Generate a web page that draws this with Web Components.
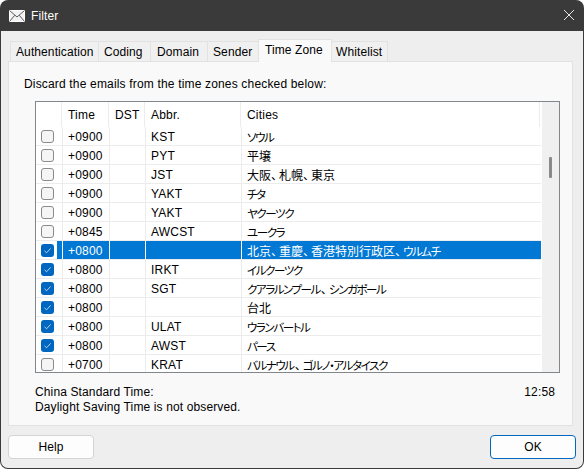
<!DOCTYPE html>
<html>
<head>
<meta charset="utf-8">
<title>Filter</title>
<style>
  html, body { margin: 0; padding: 0; background: #fff; }
  body { font: 12px "Liberation Sans", "Noto Sans CJK JP", sans-serif; color: #000; }
</style>
</head>
<body>
<filter-dialog heading="Filter">
  <zone-tabs>
    <zone-table></zone-table>
  </zone-tabs>
</filter-dialog>

<script>
// Time zone rows: offset, dst, abbreviation, cities, checked, selected
const ZONES = [
  ['+0900', '', 'KST', 'ソウル', false],
  ['+0900', '', 'PYT', '平壌', false],
  ['+0900', '', 'JST', '大阪、札幌、東京', false],
  ['+0900', '', 'YAKT', 'チタ', false],
  ['+0900', '', 'YAKT', 'ヤクーツク', false],
  ['+0845', '', 'AWCST', 'ユークラ', false],
  ['+0800', '', '', '北京、重慶、香港特別行政区、ウルムチ', true, true],
  ['+0800', '', 'IRKT', 'イルクーツク', true],
  ['+0800', '', 'SGT', 'クアラルンプール、シンガポール', true],
  ['+0800', '', '', '台北', true],
  ['+0800', '', 'ULAT', 'ウランバートル', true],
  ['+0800', '', 'AWST', 'パース', true],
  ['+0700', '', 'KRAT', 'バルナウル、ゴルノ・アルタイスク', false],
];

// Outer window: title bar, tab page, footer buttons
class FilterDialog extends HTMLElement {
  constructor() {
    super();
    const sdom = this.attachShadow({mode: 'open'});
    sdom.innerHTML = `
      <style>
        :host { display: flex; flex-direction: column; width: 584px; height: 469px; box-sizing: border-box;
          background: #3a3a3a; border-radius: 8px; overflow: hidden; }
        .title { height: 31px; display: flex; align-items: center; color: #fff; padding-left: 9px; flex: none; }
        .title svg { margin-right: 6px; }
        .title span { flex: 1; letter-spacing: 0.1px; }
        .title .close { width: 12px; height: 12px; margin: 0 9px 2px 0; }
        .client { flex: 1; margin: 0 1px 1px 1px; background: #eeeeee; border-radius: 0 0 7px 7px;
          display: flex; flex-direction: column; padding: 8px 10px 0 7px; min-height: 0; }
        .foot { display: flex; justify-content: space-between; padding: 9px 0 0 0; flex: none; margin-right: -3px; }
        button { font: inherit; width: 86px; height: 24px; background: #fdfdfd; border: 1px solid #d4d4d4;
          border-radius: 4px; padding: 0; color: #000; letter-spacing: 0.1px; }
        button.ok { border-color: #0067c0; }
      </style>
      <div class="title">
        <svg width="16" height="12" viewBox="0 0 16 12">
          <rect x="0.5" y="0.5" width="15" height="11" fill="#f2f2f2" stroke="#ffffff"/>
          <path d="M0.5 0.5 8 7 15.5 0.5M0.5 11.5 5.8 5.2M15.5 11.5 10.2 5.2" fill="none" stroke="#5c5c5c"/>
        </svg>
        <span></span>
        <svg class="close" viewBox="0 0 12 12"><path d="M1 1 11 11M11 1 1 11" stroke="#e8e8e8" fill="none"/></svg>
      </div>
      <div class="client">
        <slot></slot>
        <div class="foot"><button>Help</button><button class="ok">OK</button></div>
      </div>`;
    sdom.querySelector('.title span').textContent = this.getAttribute('heading');
  }
}

// Tab strip and the page under it
class ZoneTabs extends HTMLElement {
  constructor() {
    super();
    const names = [['Authentication', 89, 5], ['Coding', 53, 5], ['Domain', 58, 6], ['Sender', 52, 5], ['Time Zone', 74, 6], ['Whitelist', 57, 4]];
    const sdom = this.attachShadow({mode: 'open'});
    sdom.innerHTML = `
      <style>
        :host { display: flex; flex-direction: column; height: 387px; flex: none; }
        .strip { display: flex; height: 22px; padding-left: 2px; align-items: flex-end; flex: none; position: relative; z-index: 1; }
        .tab { height: 20px; box-sizing: border-box; border: 1px solid #e2e2e2; border-bottom: none; margin-right: -1px;
          background: #f0f0f0; line-height: 20px; letter-spacing: 0.1px; white-space: nowrap; }
        .tab.on { background: #f9f9f9; line-height: 21px; height: 23px; margin-bottom: -1px; }
        .page { flex: 1; border: 1px solid #e2e2e2; background: #f9f9f9; display: flex; flex-direction: column; min-height: 0; }
        .lead { margin: 15px 0 0 15px; height: 15px; line-height: 15px; flex: none; letter-spacing: 0.17px; }
        .table { margin: 9px 0 0 26px; flex: none; }
        .info { display: flex; justify-content: space-between; margin: 12px 17px 0 26px; line-height: 15px; letter-spacing: 0.13px; }
      </style>
      <div class="strip"></div>
      <div class="page">
        <div class="lead">Discard the emails from the time zones checked below:</div>
        <div class="table"><slot></slot></div>
        <div class="info">
          <div>China Standard Time:<br>Daylight Saving Time is not observed.</div>
          <div>12:58</div>
        </div>
      </div>`;
    const strip = sdom.querySelector('.strip');
    names.forEach(([name, width, pad]) => {
      const t = document.createElement('div');
      t.className = name === 'Time Zone' ? 'tab on' : 'tab';
      t.style.width = width + 'px';
      t.style.paddingLeft = pad + 'px';
      t.textContent = name;
      strip.appendChild(t);
    });
  }
}

// The reference font has condensed kana, so kana runs and commas get their own spans
function cityMarkup(text) {
  return text
    .replace(/[\u30A0-\u30FF]+/g, '<span class="k">$&</span>')
    .replace(/、/g, '<span class="p">、</span>');
}

// List view with header, rows and scroll bar
class ZoneTable extends HTMLElement {
  constructor() {
    super();
    const sdom = this.attachShadow({mode: 'open'});
    const rows = ZONES.map((z) => `
      <div class="row ${z[5] ? 'sel' : ''}">
        <div class="c0"><span class="box ${z[4] ? 'on' : ''}">${z[4] ? '<svg width="13" height="13" viewBox="0 0 13 13"><path d="M3.5 6.8 5.6 8.8 9.6 4.4" fill="none" stroke="#b9d4ee"/></svg>' : ''}</span></div>
        <div>${z[0]}</div><div>${z[1]}</div><div>${z[2]}</div><div class="c4">${cityMarkup(z[3])}</div>
      </div>`).join('');
    sdom.innerHTML = `
      <style>
        :host { display: block; width: 525px; height: 272px; box-sizing: border-box; border: 1px solid #82878c; background: #fff; overflow: hidden; letter-spacing: 0.2px; }
        .wrap { display: flex; height: 100%; }
        .list { width: 506px; flex: none; overflow: hidden; }
        .head { display: grid; grid-template-columns: 26px 47px 36px 96px 299px; height: 25px; line-height: 27px; width: 504px; }
        .head > div { box-sizing: border-box; border-right: 1px solid #ececec; padding-left: 6px; height: 25px; overflow: hidden; }
        .row { display: grid; grid-template-columns: 27px 47px 36px 96px 299px; width: 505px; height: 19px; line-height: 20px; box-sizing: border-box; border-bottom: 1px solid #ececec; }
        .row > div { box-sizing: border-box; border-right: 1px solid #ececec; padding-left: 5px; white-space: nowrap; overflow: hidden; height: 18px; }
        .row > .c0 { padding: 3px 0 0 5px; }
        .row > .c4 { font-family: "Noto Sans CJK JP", sans-serif; font-feature-settings: "palt"; letter-spacing: 0; border-right: none; }
        .k { font-size: 11.5px; letter-spacing: -1.4px; margin-right: 1px; }
        .p { margin-right: 2px; }
        .row.sel { color: #fff; }
        .row.sel > div { background: #0078d4; border-right-color: #fff; }
        .row.sel > .c0 { background: linear-gradient(to right, #fff 21px, #0078d4 21px); }
        .box { width: 13px; height: 13px; box-sizing: border-box; border: 1px solid #8a8a8a; border-radius: 3px; background: #f5f5f5; display: block; }
        .box.on { border: none; background: #0067c0; }
        .box svg { display: block; }
        .bar { width: 17px; flex: none; position: relative; background: #f0f0f0; }
        .thumb { position: absolute; left: 7px; top: 55px; width: 3px; height: 21px; border-radius: 1px; background: #8a8a8a; }
      </style>
      <div class="wrap">
        <div class="list">
          <div class="head"><div></div><div>Time</div><div>DST</div><div>Abbr.</div><div>Cities</div></div>
          ${rows}
        </div>
        <div class="bar"><div class="thumb"></div></div>
      </div>`;
  }
}

window.customElements.define('filter-dialog', FilterDialog);
window.customElements.define('zone-tabs', ZoneTabs);
window.customElements.define('zone-table', ZoneTable);
</script>
</body>
</html>
